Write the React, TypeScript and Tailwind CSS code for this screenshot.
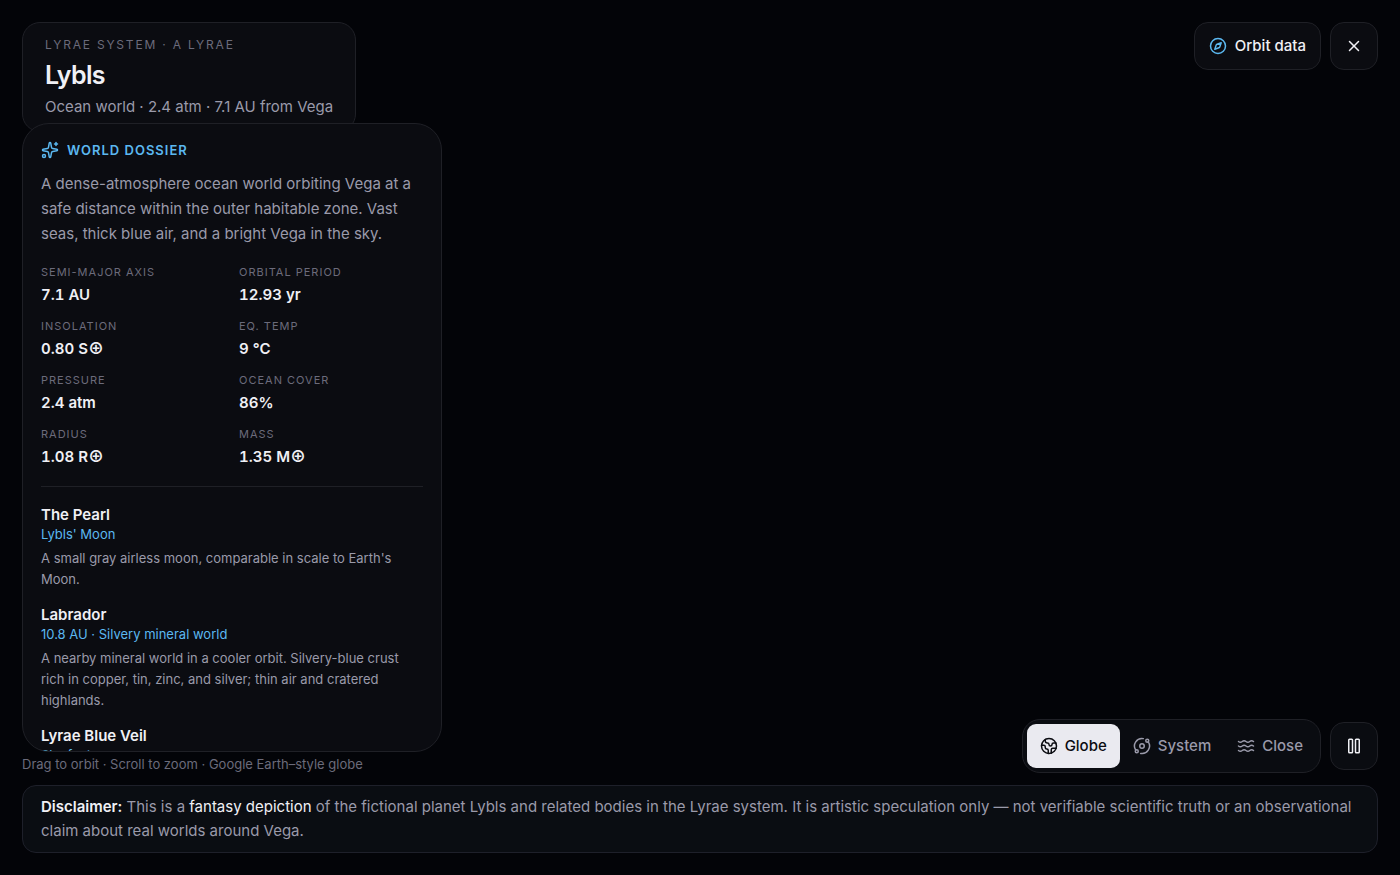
import { useState } from 'react';
import { Compass, Earth, Orbit, Pause, Sparkles, Waves, X } from 'lucide-react';

const stats = [
    { label: 'Semi-major axis', value: '7.1 AU' },
    { label: 'Orbital period', value: '12.93 yr' },
    { label: 'Insolation', value: '0.80 S', earth: true },
    { label: 'Eq. temp', value: '9 °C' },
    { label: 'Pressure', value: '2.4 atm' },
    { label: 'Ocean cover', value: '86%' },
    { label: 'Radius', value: '1.08 R', earth: true },
    { label: 'Mass', value: '1.35 M', earth: true },
];

const bodies = [
    {
        name: 'The Pearl',
        tagline: "Lybls' Moon",
        description: "A small gray airless moon, comparable in scale to Earth's Moon.",
    },
    {
        name: 'Labrador',
        tagline: '10.8 AU · Silvery mineral world',
        description:
            'A nearby mineral world in a cooler orbit. Silvery-blue crust rich in copper, tin, zinc, and silver; thin air and cratered highlands.',
    },
    {
        name: 'Lyrae Blue Veil',
        tagline: 'Sky feature',
        description: '',
    },
];

const views = [
    { id: 'globe', label: 'Globe', icon: Earth },
    { id: 'system', label: 'System', icon: Orbit },
    { id: 'close', label: 'Close', icon: Waves },
];

export default function App() {
    const [view, setView] = useState('globe');

    return (
        <div className="flex h-screen flex-col bg-[#030408] p-[22px] font-['Inter',sans-serif] text-[#f0f0f5]">
            <header className="flex items-start justify-between">
                <div className="rounded-[18px] border border-[#1f2026] bg-[#0b0c11] px-[22px] py-3">
                    <p className="text-[12px] leading-5 tracking-[0.15em] text-[#6b6b7b] uppercase">Lyrae System · A Lyrae</p>
                    <h1 className="mt-1 text-[25px] leading-8 font-semibold tracking-tight">Lybls</h1>
                    <p className="mt-1 text-[15px] leading-6 text-[#9a9aaa]">Ocean world · 2.4 atm · 7.1 AU from Vega</p>
                </div>

                <div className="flex gap-[9px]">
                    <button className="flex h-12 items-center gap-2 rounded-[14px] border border-[#1f2026] bg-[#0b0c11] px-[14px] text-[15px] font-medium">
                        <Compass size={18} className="text-[#5bb8f0]" />
                        Orbit data
                    </button>
                    <button aria-label="Exit" className="flex size-12 items-center justify-center rounded-[14px] border border-[#1f2026] bg-[#0b0c11]">
                        <X size={18} />
                    </button>
                </div>
            </header>

            <main className="flex min-h-0 flex-1 items-stretch justify-between">
                {/* the dossier tucks over the bottom edge of the title card */}
                <div className="-mt-[9px] flex min-h-0 w-[420px] flex-col">
                    <aside className="relative min-h-0 flex-1 overflow-hidden rounded-[27px] border border-[#1f2026] bg-[#0b0c11] px-[18px] pt-4">
                        <h2 className="flex items-center gap-2 text-[13px] leading-5 font-semibold tracking-[1px] text-[#5bb8f0] uppercase">
                            <Sparkles size={18} />
                            World dossier
                        </h2>
                        <p className="mt-[11px] text-[15px] leading-[25px] text-[#9a9aaa]">
                            A dense-atmosphere ocean world orbiting Vega at a safe distance within the outer habitable zone. Vast seas,
                            thick blue air, and a bright Vega in the sky.
                        </p>

                        <dl className="mt-[18px] grid grid-cols-2 gap-x-[14px] gap-y-[11px]">
                            {stats.map((stat) => (
                                <div key={stat.label}>
                                    <dt className="text-[11px] leading-4 tracking-[1px] text-[#6b6b7b] uppercase">{stat.label}</dt>
                                    <dd className="mt-[3px] h-6 text-[15px] leading-6 font-semibold tabular-nums">
                                        {stat.value}
                                        {stat.earth && <span className="font-['Noto_Sans_CJK_JP',sans-serif] text-[16px] leading-none">⊕</span>}
                                    </dd>
                                </div>
                            ))}
                        </dl>

                        <div className="mt-[17px] flex flex-col gap-[13px] border-t border-[#1f2026] pt-4">
                            {bodies.map((body) => (
                                <section key={body.name}>
                                    <h3 className="text-[15px] leading-6 font-semibold">{body.name}</h3>
                                    <p className="text-[13px] leading-[14px] text-[#5bb8f0]">{body.tagline}</p>
                                    <p className="mt-[7px] text-[13px] leading-[21px] text-[#9a9aaa]">{body.description}</p>
                                </section>
                            ))}
                        </div>
                    </aside>
                    <p className="mt-[3px] text-[13px] leading-[18px] text-[#6b6b7b]">Drag to orbit · Scroll to zoom · Google Earth–style globe</p>
                </div>

                <div className="flex items-center gap-[9px] self-end">
                    <div className="flex rounded-[18px] border border-[#1f2026] bg-[#0a0c11] p-1">
                        {views.map(({ id, label, icon: Icon }) => (
                            <button
                                key={id}
                                onClick={() => setView(id)}
                                aria-pressed={view === id}
                                className={`flex h-11 items-center gap-[7px] rounded-[9px] px-[13px] text-[15px] font-medium ${
                                    view === id ? 'bg-[#eaeaf0] text-[#0b0c11]' : 'text-[#9a9aaa]'
                                }`}
                            >
                                <Icon size={18} />
                                {label}
                            </button>
                        ))}
                    </div>
                    <button aria-label="Pause" className="flex size-12 items-center justify-center rounded-[14px] border border-[#1f2026] bg-[#0a0c11]">
                        <Pause size={18} />
                    </button>
                </div>
            </main>

            <footer className="mt-3 rounded-[14px] border border-[#1e202a] bg-[#0a0d12] px-[18px] py-[9px] text-[15px] leading-6 text-[#9a9aaa]">
                <strong className="font-semibold text-[#f0f0f5]">Disclaimer:</strong> This is a{' '}
                <span className="text-[#f0f0f5]">fantasy depiction</span> of the fictional planet Lybls and related bodies in the Lyrae
                system. It is artistic speculation only — not verifiable scientific truth or an observational claim about real worlds
                around Vega.
            </footer>
        </div>
    );
}
